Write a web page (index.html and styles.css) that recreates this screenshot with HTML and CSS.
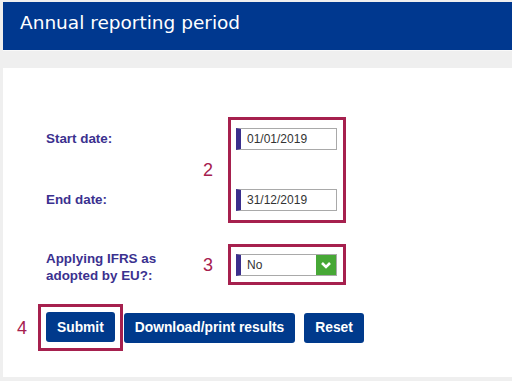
FILE: index.html
```html
<!DOCTYPE html>
<html lang="en">
<head>
    <meta charset="UTF-8">
    <meta name="viewport" content="width=device-width, initial-scale=1.0">
    <title>Annual reporting period</title>
    <link rel="stylesheet" href="styles.css">
</head>
<body>
    <header class="page-header">
        <h1>Annual reporting period</h1>
    </header>

    <div class="card">
        <!-- Dates -->
        <div class="row row-dates">
            <div class="labels">
                <label for="start">Start date:</label>
                <label for="end">End date:</label>
            </div>
            <span class="step">2</span>
            <div class="mark mark-dates">
                <input type="text" id="start" class="field" value="01/01/2019">
                <input type="text" id="end" class="field" value="31/12/2019">
            </div>
        </div>

        <!-- IFRS -->
        <div class="row row-ifrs">
            <div class="labels">
                <label>Applying IFRS as<br>adopted by EU?:</label>
            </div>
            <span class="step">3</span>
            <div class="mark">
                <div class="select-box">
                    <span class="select-value">No</span>
                    <span class="select-arrow">
                        <svg width="12" height="10" viewBox="0 0 12 10"><path d="M2 3 L6 7 L10 3" fill="none" stroke="#fff" stroke-width="2.6"/></svg>
                    </span>
                </div>
            </div>
        </div>

        <!-- Buttons -->
        <div class="row row-buttons">
            <span class="step step-small">4</span>
            <div class="mark mark-button">
                <button type="submit">Submit</button>
            </div>
            <button type="button" class="btn-download">Download/print results</button>
            <button type="reset" class="btn-reset">Reset</button>
        </div>
    </div>
</body>
</html>
```

FILE: styles.css
```css
body {
    margin: 0;
    padding: 2px 0 4px 3px;
    background-color: #efefef;
    font-family: 'Liberation Sans', Arial, sans-serif;
    color: #333;
}

.page-header {
    background-color: #00388f;
    padding: 11px 0 17px 17px;
    border-bottom: 1px solid #f9f9f9;
}

.page-header h1 {
    margin: 0;
    font-family: 'DejaVu Sans', Verdana, sans-serif;
    font-size: 18.5px;
    font-weight: normal;
    line-height: 20px;
    color: #fff;
}

.card {
    margin-top: 17px;
    background: #fff;
    padding: 49px 0 26px 14px;
}

.row {
    display: flex;
    align-items: center;
}

.row-dates,
.row-ifrs {
    margin-left: 29px;
}

.row-ifrs {
    margin-top: 21px;
}

.row-buttons {
    margin-top: 19px;
}

.labels {
    width: 157px;
    display: flex;
    flex-direction: column;
}

.row-dates .labels {
    align-self: flex-start;
    padding-top: 11px;
    gap: 39px;
}

.labels label {
    font-size: 13.4px;
    font-weight: bold;
    color: #3b318f;
    line-height: 22px;
}

.row-ifrs .labels label {
    line-height: 17px;
    padding-top: 4px;
}

.step {
    width: 25px;
    font-size: 18px;
    color: #a6204e;
    line-height: 20px;
}

.step-small {
    width: 21px;
}

.mark {
    border: 3px solid #a6204e;
    padding: 7px 6px 6px 5px;
}

.mark-dates {
    display: flex;
    flex-direction: column;
    gap: 39px;
    padding: 8px 6px 9px 5px;
}

.mark-button {
    padding: 5px 5px 6px 5px;
}

.field {
    box-sizing: border-box;
    width: 101px;
    height: 22px;
    margin: 0;
    border: 1px solid #a9a9a9;
    border-left: 5px solid #3b2f8c;
    padding: 0 0 0 6px;
    font-family: 'Liberation Sans', Arial, sans-serif;
    font-size: 12px;
    color: #333;
    outline: none;
}

.select-box {
    box-sizing: border-box;
    width: 101px;
    height: 22px;
    display: flex;
    border: 1px solid #a9a9a9;
    border-left: 5px solid #3b2f8c;
}

.select-value {
    flex: 1;
    padding-left: 6px;
    font-size: 12px;
    line-height: 20px;
    color: #333;
}

.select-arrow {
    width: 20px;
    background-color: #47a836;
    display: flex;
    align-items: center;
    justify-content: center;
}

button {
    height: 30px;
    padding: 0 11px;
    border: none;
    border-radius: 3px;
    background-color: #003a8c;
    color: #fff;
    font-family: 'Liberation Sans', Arial, sans-serif;
    font-size: 13.8px;
    font-weight: bold;
    cursor: pointer;
}

.btn-download {
    margin-left: 1px;
}

.btn-reset {
    margin-left: 9px;
}
```
